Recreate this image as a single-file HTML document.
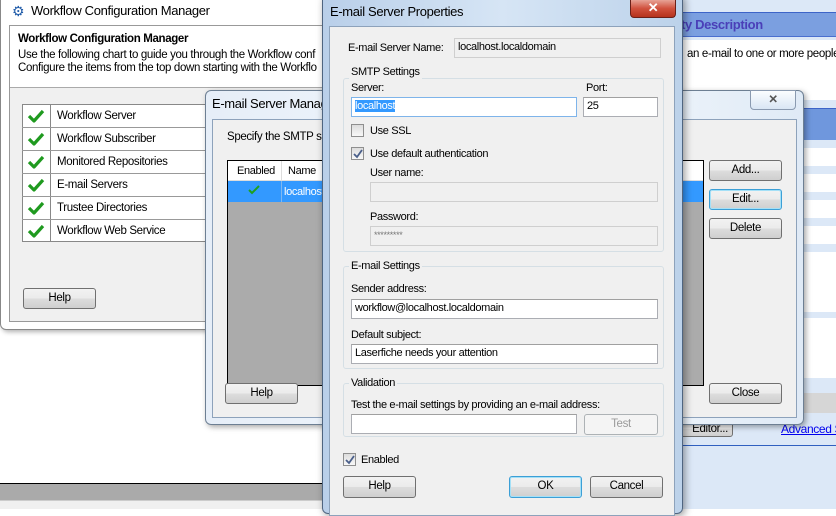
<!DOCTYPE html>
<html><head><meta charset="utf-8"><style>
*{box-sizing:border-box;margin:0;padding:0}
body{width:836px;height:509px;overflow:hidden;position:relative;background:#fff;font-family:"Liberation Sans",sans-serif;font-size:11px;letter-spacing:-0.35px;color:#000}
.a{position:absolute}
.t{position:absolute;white-space:nowrap;line-height:14px}
.btn{position:absolute;border:1px solid #707070;border-radius:3px;background:linear-gradient(#f2f2f2 0,#ebebeb 50%,#dddddd 51%,#cfcfcf 100%);text-align:center;line-height:18px;font-size:11.5px}
.fld{position:absolute;border:1px solid #abadb3;border-top-color:#a0a0a0;background:#fff;padding-left:3px;line-height:17px;white-space:nowrap}
.dis{background:#f0f0f0;border-color:#cfcfcf}
.grp{position:absolute;border:1px solid #d5dfe5;border-radius:3px}
.grpl{position:absolute;background:#f0f0f0;padding:0 2px;line-height:14px;white-space:nowrap}
.cb{position:absolute;width:13px;height:13px;border:1px solid #8f8f8f;background:linear-gradient(#ddd,#f8f8f8)}
</style></head><body>

<div class="a" style="left:680px;top:0;width:156px;height:509px;background:#dce8f7"></div>
<div class="a" style="left:680px;top:12px;width:156px;height:25px;background:#7b9fe0;border-top:1px solid #3d64c8;border-bottom:1px solid #4a6fcf"></div>
<div class="t" style="left:681px;top:18px;font-weight:bold;font-size:13px;color:#4a3fb8">ty Description</div>
<div class="a" style="left:680px;top:40px;width:156px;height:60px;background:#fff"></div>
<div class="t" style="left:687px;top:47px;font-size:11.5px">an e-mail to one or more people</div>
<div class="a" style="left:680px;top:108px;width:156px;height:32px;background:#6f97dd;border-top:1px solid #3d64c8"></div>
<div class="a" style="left:680px;top:148px;width:156px;height:18px;background:#fff"></div>
<div class="a" style="left:680px;top:174px;width:156px;height:18px;background:#fff"></div>
<div class="a" style="left:680px;top:200px;width:156px;height:18px;background:#fff"></div>
<div class="a" style="left:680px;top:226px;width:156px;height:18px;background:#fff"></div>
<div class="a" style="left:680px;top:252px;width:156px;height:60px;background:#fff"></div>
<div class="a" style="left:680px;top:318px;width:156px;height:60px;background:#fff"></div>
<div class="a" style="left:680px;top:393px;width:156px;height:20px;background:#d6d6d6"></div>
<div class="btn" style="left:672px;top:421px;width:61px;height:16px;line-height:14px;text-align:right;padding-right:4px">Editor...</div>
<div class="t" style="left:781px;top:422px;color:#0000ee;text-decoration:underline;font-size:12px">Advanced S</div>
<div class="a" style="left:680px;top:445px;width:156px;height:1px;background:#3060c0"></div>

<div class="a" style="left:0;top:483px;width:330px;height:17px;background:#aaa;border-top:1px solid #000"></div>
<div class="a" style="left:0;top:500px;width:330px;height:9px;background:#f0f0f0;border-top:1px solid #ccc"></div>

<!-- Window 1 -->
<div class="a" style="left:0;top:0;width:330px;height:330px;background:#fff;border:1px solid #888;border-radius:0 0 6px 6px;box-shadow:2px 2px 5px rgba(0,0,0,.3)"></div>
<div class="a" style="left:1px;top:0;width:329px;height:24px;background:#fff"></div>
<div class="t" style="left:12px;top:4px;font-size:14px;color:#1e5aa8">&#9881;</div>
<div class="t" style="left:31px;top:4px;font-size:13px">Workflow Configuration Manager</div>
<div class="a" style="left:9px;top:25px;width:321px;height:297px;border:1px solid #999;background:#f0f0f0"></div>
<div class="a" style="left:10px;top:26px;width:320px;height:62px;background:#fff;border-bottom:1px solid #aaa"></div>
<div class="t" style="left:18px;top:32px;font-weight:bold;font-size:11.5px">Workflow Configuration Manager</div>
<div class="t" style="left:18px;top:48px;font-size:11.5px">Use the following chart to guide you through the Workflow conf</div>
<div class="t" style="left:18px;top:61px;font-size:11.5px">Configure the items from the top down starting with the Workflo</div>
<div class="a" style="left:22px;top:104px;width:190px;height:138px;border:1px solid #888;background:#fff"></div>
<div class="a" style="left:50px;top:104px;width:1px;height:138px;background:#888"></div>
<div class="a" style="left:22px;top:127px;width:190px;height:1px;background:#999"></div>
<div class="a" style="left:22px;top:150px;width:190px;height:1px;background:#999"></div>
<div class="a" style="left:22px;top:173px;width:190px;height:1px;background:#999"></div>
<div class="a" style="left:22px;top:196px;width:190px;height:1px;background:#999"></div>
<div class="a" style="left:22px;top:219px;width:190px;height:1px;background:#999"></div>
<svg class="a" style="left:26px;top:107px" width="20" height="135">
<g fill="none" stroke="#1f9a1f" stroke-width="3.2" stroke-linejoin="round">
<path d="M3 9l5 5 9-10"/><path d="M3 32l5 5 9-10"/><path d="M3 55l5 5 9-10"/><path d="M3 78l5 5 9-10"/><path d="M3 101l5 5 9-10"/><path d="M3 124l5 5 9-10"/></g></svg>
<div class="t" style="left:57px;top:109px;font-size:11.5px">Workflow Server</div>
<div class="t" style="left:57px;top:132px;font-size:11.5px">Workflow Subscriber</div>
<div class="t" style="left:57px;top:155px;font-size:11.5px">Monitored Repositories</div>
<div class="t" style="left:57px;top:178px;font-size:11.5px">E-mail Servers</div>
<div class="t" style="left:57px;top:201px;font-size:11.5px">Trustee Directories</div>
<div class="t" style="left:57px;top:224px;font-size:11.5px">Workflow Web Service</div>
<div class="btn" style="left:23px;top:288px;width:73px;height:21px">Help</div>

<!-- Window 2 -->
<div class="a" style="left:205px;top:90px;width:599px;height:335px;border:1px solid #6d7f93;border-radius:6px;box-shadow:2px 2px 6px rgba(0,0,0,.35);background:linear-gradient(90deg,#e6eef8,#f5f9fd 60%,#dfeaf6)"></div>
<div class="t" style="left:212px;top:97px;font-size:13px">E-mail Server Manag</div>
<div class="btn" style="left:750px;top:90px;width:46px;height:20px;border-radius:0 0 4px 4px;background:linear-gradient(#fbfdff,#d9e6f4);border-color:#8a9ab0;color:#555;font-weight:bold;line-height:18px">&#x2715;</div>
<div class="a" style="left:212px;top:119px;width:585px;height:299px;background:#f0f0f0;border:1px solid #8da2bb"></div>
<div class="t" style="left:227px;top:130px;font-size:11.5px">Specify the SMTP s</div>
<div class="a" style="left:227px;top:160px;width:477px;height:226px;border:1px solid #000;background:#ababab"></div>
<div class="a" style="left:228px;top:161px;width:475px;height:20px;background:#fff;border-bottom:1px solid #ddd"></div>
<div class="t" style="left:237px;top:164px">Enabled</div>
<div class="a" style="left:281px;top:161px;width:1px;height:20px;background:#ddd"></div>
<div class="t" style="left:288px;top:164px">Name</div>
<div class="a" style="left:228px;top:181px;width:475px;height:21px;background:#3399ff"></div>
<div class="a" style="left:281px;top:181px;width:1px;height:21px;background:#7fb8f0"></div>
<svg class="a" style="left:247px;top:184px" width="14" height="12"><path d="M2 6l3 3 7-7" fill="none" stroke="#1fa01f" stroke-width="2"/></svg>
<div class="t" style="left:284px;top:185px;color:#fff">localhost</div>
<div class="btn" style="left:709px;top:160px;width:73px;height:21px">Add...</div>
<div class="btn" style="left:709px;top:189px;width:73px;height:21px;border-color:#3c9fd6;box-shadow:inset 0 0 0 1px #a4e0f7">Edit...</div>
<div class="btn" style="left:709px;top:218px;width:73px;height:21px">Delete</div>
<div class="btn" style="left:709px;top:383px;width:73px;height:21px">Close</div>
<div class="btn" style="left:225px;top:383px;width:73px;height:21px">Help</div>

<!-- Window 3 -->
<div class="a" style="left:322px;top:-6px;width:361px;height:520px;border:1px solid #4f6580;border-radius:6px;box-shadow:2px 2px 8px rgba(0,0,0,.4);background:linear-gradient(90deg,#b9cfe9,#d6e5f5 50%,#bcd2ea)"></div>
<div class="t" style="left:330px;top:5px;font-size:13px">E-mail Server Properties</div>
<div class="a" style="left:630px;top:0;width:46px;height:18px;border:1px solid #6b2018;border-top:none;border-radius:0 0 4px 4px;background:linear-gradient(#e7a396,#d0513d 50%,#b5321d);color:#fff;text-align:center;font-weight:bold;font-size:13px;line-height:16px">&#x2715;</div>
<div class="a" style="left:329px;top:26px;width:346px;height:490px;background:#f0f0f0;border:1px solid #8da2bb"></div>

<div class="t" style="left:348px;top:41px">E-mail Server Name:</div>
<div class="fld dis" style="left:454px;top:38px;width:207px;height:20px">localhost.localdomain</div>

<div class="grp" style="left:343px;top:78px;width:321px;height:174px"></div>
<div class="grpl" style="left:349px;top:65px">SMTP Settings</div>
<div class="t" style="left:351px;top:81px">Server:</div>
<div class="t" style="left:586px;top:81px">Port:</div>
<div class="fld" style="left:351px;top:97px;width:226px;height:20px;border-color:#7eb4ea"><span style="background:#3399ff;color:#fff">localhost</span></div>
<div class="fld" style="left:583px;top:97px;width:75px;height:20px">25</div>
<div class="cb" style="left:351px;top:124px"></div>
<div class="t" style="left:370px;top:124px">Use SSL</div>
<div class="cb" style="left:351px;top:147px"></div>
<svg class="a" style="left:352px;top:148px" width="12" height="12"><path d="M2 6l3 3 5-7" fill="none" stroke="#4a5f8a" stroke-width="1.8"/></svg>
<div class="t" style="left:370px;top:147px">Use default authentication</div>
<div class="t" style="left:370px;top:166px">User name:</div>
<div class="fld dis" style="left:370px;top:182px;width:288px;height:20px"></div>
<div class="t" style="left:370px;top:210px">Password:</div>
<div class="fld dis" style="left:370px;top:226px;width:288px;height:20px;font-size:9px;color:#777">*********</div>

<div class="grp" style="left:343px;top:266px;width:321px;height:103px"></div>
<div class="grpl" style="left:349px;top:259px">E-mail Settings</div>
<div class="t" style="left:351px;top:282px">Sender address:</div>
<div class="fld" style="left:351px;top:299px;width:307px;height:20px">workflow@localhost.localdomain</div>
<div class="t" style="left:351px;top:328px">Default subject:</div>
<div class="fld" style="left:351px;top:344px;width:307px;height:20px">Laserfiche needs your attention</div>

<div class="grp" style="left:343px;top:383px;width:321px;height:54px"></div>
<div class="grpl" style="left:349px;top:376px">Validation</div>
<div class="t" style="left:351px;top:398px">Test the e-mail settings by providing an e-mail address:</div>
<div class="fld" style="left:351px;top:414px;width:226px;height:20px"></div>
<div class="btn" style="left:584px;top:414px;width:74px;height:21px;background:#f4f4f4;border-color:#adb2b5;color:#9a9a9a">Test</div>

<div class="cb" style="left:343px;top:453px"></div>
<svg class="a" style="left:344px;top:454px" width="12" height="12"><path d="M2 6l3 3 5-7" fill="none" stroke="#4a5f8a" stroke-width="1.8"/></svg>
<div class="t" style="left:361px;top:453px">Enabled</div>
<div class="btn" style="left:343px;top:476px;width:73px;height:22px">Help</div>
<div class="btn" style="left:509px;top:476px;width:73px;height:22px;border-color:#3c9fd6;box-shadow:inset 0 0 0 1px #a4e0f7">OK</div>
<div class="btn" style="left:590px;top:476px;width:73px;height:22px">Cancel</div>
</body></html>
